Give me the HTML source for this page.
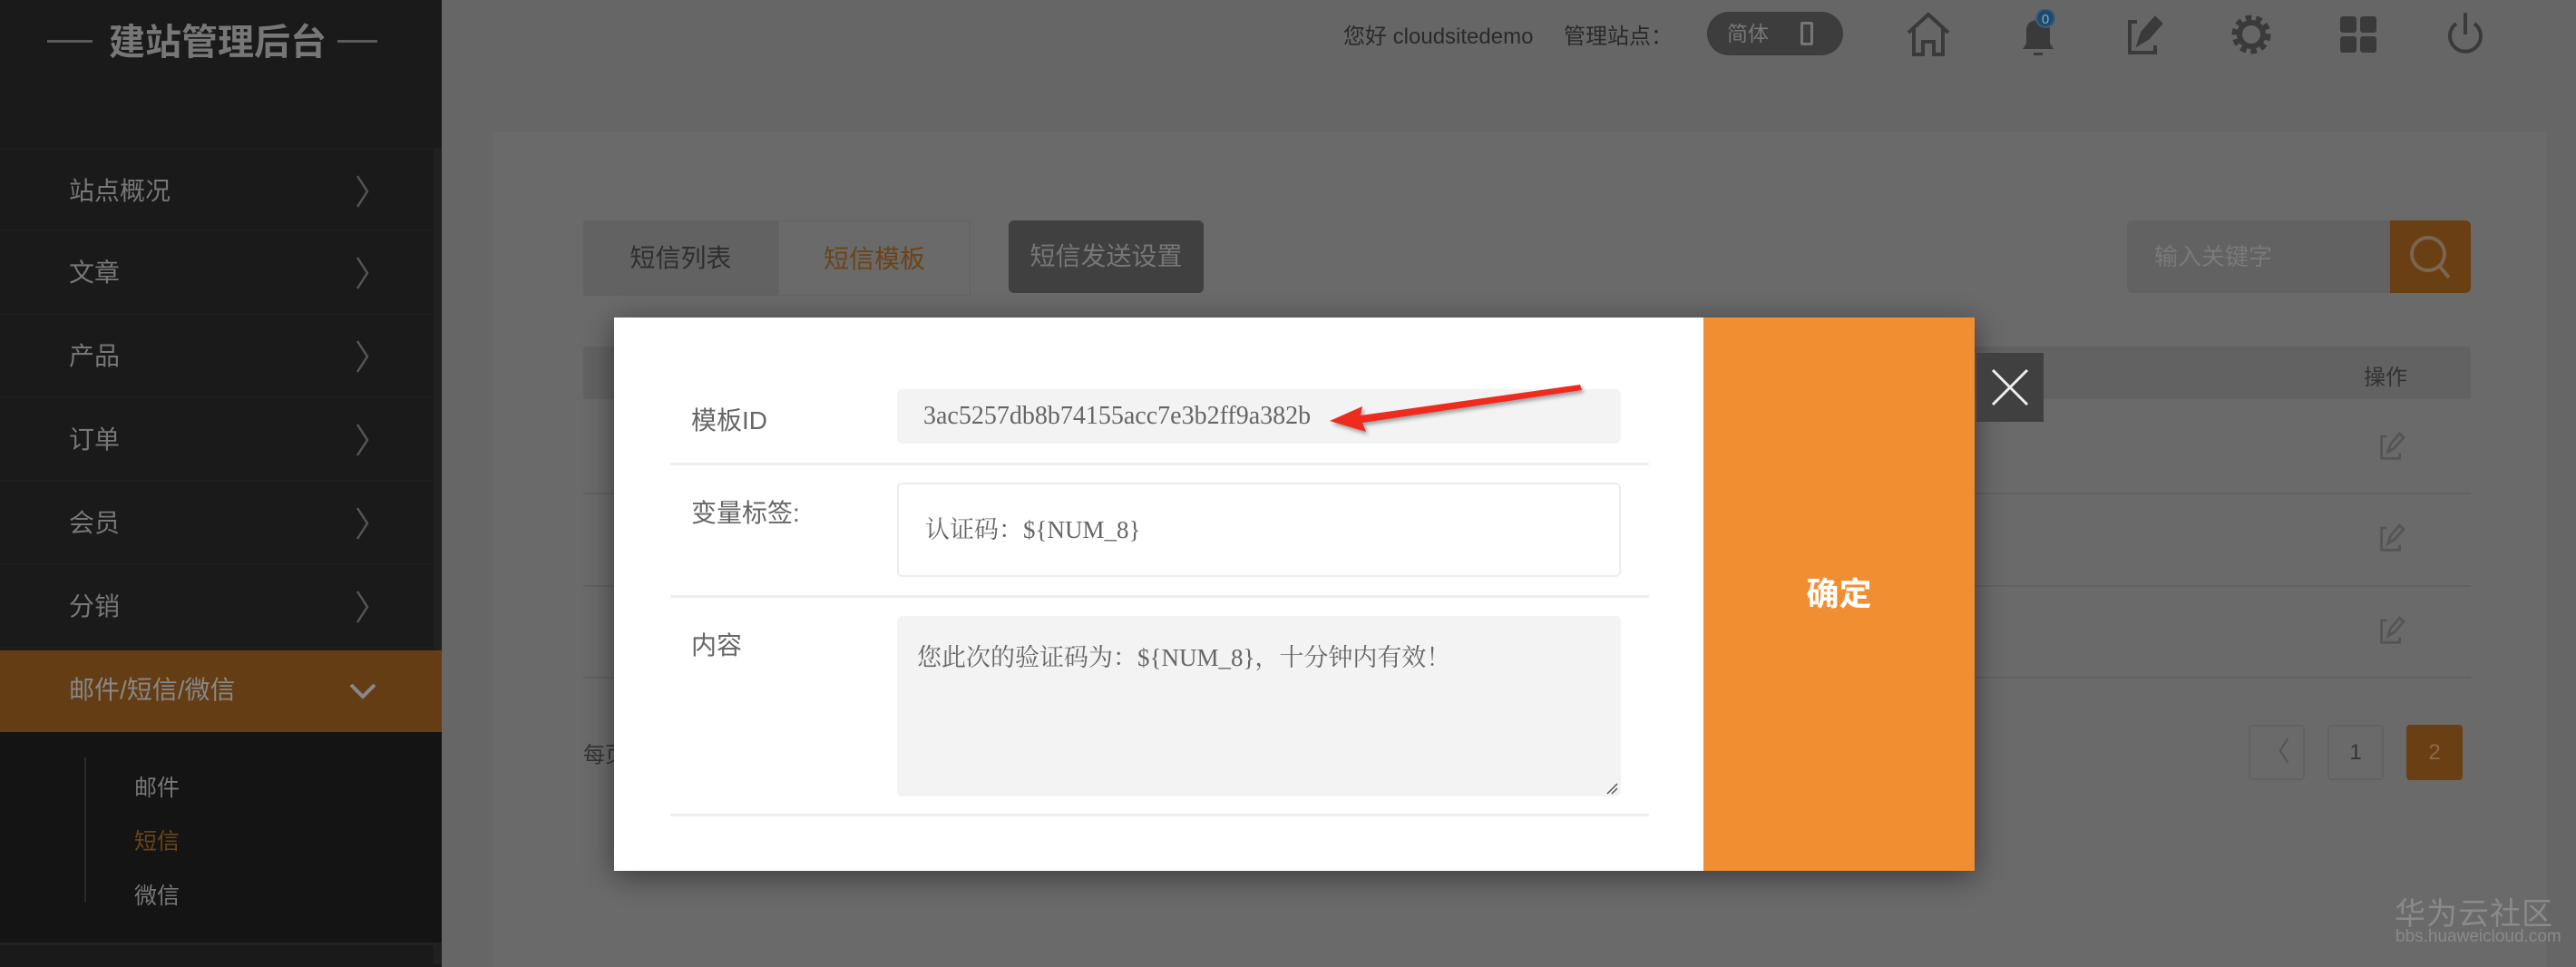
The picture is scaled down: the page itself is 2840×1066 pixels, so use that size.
<!DOCTYPE html>
<html><head><meta charset="utf-8"><style>
*{margin:0;padding:0;box-sizing:border-box}
body{width:2840px;height:1066px;overflow:hidden;background:#666;font-family:"Liberation Sans","Noto Sans CJK SC",sans-serif;position:relative}
.a{position:absolute}
.side{left:0;top:0;width:487px;height:1066px;background:#1a1a1a}
.mi{position:absolute;left:0;width:480px;height:92px;border-bottom:2px solid #1e1e1e;color:#777;font-size:28px;line-height:92px;padding-left:76px}
.mi .ch{position:absolute;left:392px;top:27px}
.sub{position:absolute;left:148px;font-size:25px;color:#777}
.ic{position:absolute;top:10px}
.lbl{position:absolute;left:762px;font-size:28px;color:#666}
.sep{position:absolute;left:739px;width:1079px;height:3px;background:#eee}
</style></head><body>
<div class="a side">
 <div class="a" style="left:52px;top:44px;width:50px;height:3px;background:#5a5a5a"></div>
 <div class="a" style="left:372px;top:44px;width:44px;height:3px;background:#5a5a5a"></div>
 <div class="a" style="left:110px;top:22px;width:260px;text-align:center;color:#777;font-size:40px;font-weight:bold;line-height:50px">建站管理后台</div>
 <div class="a" style="left:478px;top:163px;width:9px;height:900px;background:#202020"></div>
 <div class="mi" style="top:163px;border-top:2px solid #1e1e1e">站点概况<svg class="ch" width="16" height="38"><polyline points="2,2 13,19 2,36" fill="none" stroke="#555" stroke-width="2.5"/></svg></div>
 <div class="mi" style="top:255px">文章<svg class="ch" width="16" height="38"><polyline points="2,2 13,19 2,36" fill="none" stroke="#555" stroke-width="2.5"/></svg></div>
 <div class="mi" style="top:347px">产品<svg class="ch" width="16" height="38"><polyline points="2,2 13,19 2,36" fill="none" stroke="#555" stroke-width="2.5"/></svg></div>
 <div class="mi" style="top:439px">订单<svg class="ch" width="16" height="38"><polyline points="2,2 13,19 2,36" fill="none" stroke="#555" stroke-width="2.5"/></svg></div>
 <div class="mi" style="top:531px">会员<svg class="ch" width="16" height="38"><polyline points="2,2 13,19 2,36" fill="none" stroke="#555" stroke-width="2.5"/></svg></div>
 <div class="mi" style="top:623px">分销<svg class="ch" width="16" height="38"><polyline points="2,2 13,19 2,36" fill="none" stroke="#555" stroke-width="2.5"/></svg></div>
 <div class="mi" style="top:717px;height:90px;width:487px;background:#653d15;color:#888;border:none;line-height:88px">邮件/短信/微信<svg class="a" style="left:385px;top:35px" width="30" height="20"><polyline points="2,3 15,16 28,3" fill="none" stroke="#888" stroke-width="4"/></svg></div>
 <div class="a" style="left:0;top:807px;width:487px;height:232px;background:#141414"></div>
 <div class="a" style="left:93px;top:835px;width:2px;height:160px;background:#2a2a2a"></div>
 <div class="sub" style="top:849px">邮件</div>
 <div class="sub" style="top:908px;color:#6b4318">短信</div>
 <div class="sub" style="top:968px">微信</div>
 <div class="a" style="left:0;top:1039px;width:480px;height:3px;background:#222"></div>
</div>
<!-- top bar -->
<div class="a" style="left:1481px;top:20px;font-size:24px;color:#2a2a2a">您好 cloudsitedemo</div>
<div class="a" style="left:1724px;top:20px;font-size:24px;color:#2a2a2a">管理站点：</div>
<div class="a" style="left:1882px;top:13px;width:150px;height:48px;border-radius:24px;background:#3d3d3d;color:#777;font-size:23px;line-height:48px;padding-left:22px">简体<span style="position:absolute;left:103px;top:11px;width:14px;height:26px;border:3px solid #777;border-radius:2px"></span></div>
<svg class="ic" style="left:2098px" width="56" height="56" viewBox="0 0 56 56" fill="none" stroke="#3a3a3a" stroke-width="4"><path d="M6 26 L28 6 L50 26 M12 22 V50 H22 V36 H34 V50 H44 V22"/></svg>
<svg class="ic" style="left:2218px" width="60" height="56" viewBox="0 0 60 56"><path d="M12 44 H46 L42 38 V24 C42 16 37 12 29 12 C21 12 16 16 16 24 V38 Z M24 48 H34 V51 H24Z" fill="#3a3a3a"/><circle cx="37" cy="10" r="10" fill="#1f4a6a" stroke="#3d5e7a" stroke-width="2"/><text x="37" y="16" text-anchor="middle" font-size="15" fill="#8ab" font-family="Liberation Sans">0</text></svg>
<svg class="ic" style="left:2336px" width="56" height="56" viewBox="0 0 56 56" fill="none" stroke="#3a3a3a" stroke-width="4"><path d="M20 14 H12 V48 H40 V40"/><path d="M22 38 L26 26 L40 10 L46 16 L32 32 Z" fill="#3a3a3a"/></svg>
<svg class="ic" style="left:2454px" width="56" height="56" viewBox="0 0 56 56"><circle cx="28" cy="28" r="17" fill="none" stroke="#3a3a3a" stroke-width="9" stroke-dasharray="6 4.6"/><circle cx="28" cy="28" r="13" fill="none" stroke="#3a3a3a" stroke-width="6"/></svg>
<svg class="ic" style="left:2572px" width="56" height="56" viewBox="0 0 56 56" fill="#3a3a3a"><rect x="8" y="8" width="18" height="18" rx="3"/><rect x="30" y="8" width="18" height="18" rx="3"/><rect x="8" y="30" width="18" height="18" rx="3"/><rect x="30" y="30" width="18" height="18" rx="3"/></svg>
<svg class="ic" style="left:2690px" width="56" height="56" viewBox="0 0 56 56" fill="none" stroke="#3a3a3a" stroke-width="4"><path d="M18 16 A17 17 0 1 0 38 16"/><path d="M28 4 V28"/></svg>
<!-- content panel -->
<div class="a" style="left:543px;top:145px;width:2264px;height:921px;background:#6a6a6a"></div>
<div class="a" style="left:643px;top:243px;width:215px;height:83px;background:#626262;color:#2e2e2e;font-size:28px;line-height:83px;text-align:center">短信列表</div>
<div class="a" style="left:858px;top:243px;width:212px;height:83px;background:#6a6a6a;border:1px solid #636363;color:#6b4318;font-size:28px;line-height:83px;text-align:center">短信模板</div>
<div class="a" style="left:1112px;top:243px;width:215px;height:80px;background:#404040;border-radius:6px;color:#777;font-size:28px;line-height:80px;text-align:center">短信发送设置</div>
<div class="a" style="left:2345px;top:243px;width:290px;height:80px;background:#626262;border-radius:6px 0 0 6px;color:#7a7a7a;font-size:26px;line-height:80px;padding-left:30px">输入关键字</div>
<div class="a" style="left:2635px;top:243px;width:89px;height:80px;background:#6b3f14;border-radius:0 6px 6px 0"><svg width="89" height="80" viewBox="0 0 89 80" fill="none" stroke="#7a6650" stroke-width="4"><circle cx="42" cy="37" r="18"/><path d="M55 51 L65 63"/></svg></div>
<div class="a" style="left:643px;top:382px;width:2081px;height:58px;background:#626262;border-radius:4px"></div>
<div class="a" style="left:2606px;top:396px;font-size:24px;color:#333">操作</div>
<div class="a" style="left:643px;top:543px;width:2081px;height:2px;background:#626262"></div>
<div class="a" style="left:643px;top:645px;width:2081px;height:2px;background:#626262"></div>
<div class="a" style="left:643px;top:746px;width:2081px;height:2px;background:#626262"></div>
<svg class="a" style="left:2617px;top:471px" width="40" height="40" viewBox="0 0 56 56" fill="none" stroke="#555" stroke-width="4"><path d="M20 14 H12 V48 H40 V40 M22 38 L26 26 L40 10 L46 16 L32 32 Z"/></svg>
<svg class="a" style="left:2617px;top:572px" width="40" height="40" viewBox="0 0 56 56" fill="none" stroke="#555" stroke-width="4"><path d="M20 14 H12 V48 H40 V40 M22 38 L26 26 L40 10 L46 16 L32 32 Z"/></svg>
<svg class="a" style="left:2617px;top:674px" width="40" height="40" viewBox="0 0 56 56" fill="none" stroke="#555" stroke-width="4"><path d="M20 14 H12 V48 H40 V40 M22 38 L26 26 L40 10 L46 16 L32 32 Z"/></svg>
<div class="a" style="left:643px;top:812px;font-size:24px;color:#333">每页</div>
<div class="a" style="left:2479px;top:799px;width:62px;height:61px;border:2px solid #626262;border-radius:4px;color:#555;font-size:30px;line-height:57px;text-align:center">〈</div>
<div class="a" style="left:2566px;top:799px;width:62px;height:61px;border:2px solid #626262;border-radius:4px;color:#333;font-size:24px;line-height:57px;text-align:center">1</div>
<div class="a" style="left:2653px;top:799px;width:62px;height:61px;background:#6b3f14;border-radius:4px;color:#8a6a4a;font-size:24px;line-height:61px;text-align:center">2</div>
<!-- modal -->
<div class="a" style="left:677px;top:350px;width:1500px;height:610px;background:#fff;box-shadow:0 6px 30px rgba(0,0,0,.45)"></div>
<div class="a" style="left:1878px;top:350px;width:299px;height:610px;background:#f28e32;color:#fff;font-size:36px;font-weight:bold;line-height:610px;text-align:center">确定</div>
<div class="a" style="left:2179px;top:389px;width:74px;height:76px;background:#404040"><svg width="74" height="76" viewBox="0 0 74 76" stroke="#eee" stroke-width="3"><path d="M18 19 L56 57 M56 19 L18 57"/></svg></div>
<div class="lbl" style="top:442px">模板ID</div>
<div class="a" style="left:989px;top:429px;width:798px;height:60px;background:#f3f3f3;border-radius:6px;font-family:'Liberation Serif',serif;color:#666;font-size:28px;line-height:60px;padding-left:29px">3ac5257db8b74155acc7e3b2ff9a382b</div>
<div class="sep" style="top:510px"></div>
<div class="lbl" style="top:544px">变量标签:</div>
<div class="a" style="left:989px;top:532px;width:798px;height:104px;background:#fff;border:2px solid #ececec;border-radius:6px;color:#666;font-size:27px;line-height:100px;padding-left:29px;font-family:'Liberation Serif','Noto Serif CJK SC',serif">认证码：${NUM_8}</div>
<div class="sep" style="top:656px"></div>
<div class="lbl" style="top:690px">内容</div>
<div class="a" style="left:989px;top:679px;width:798px;height:199px;background:#f3f3f3;border-radius:6px;color:#666;font-size:27px;padding:24px 0 0 22px;font-family:'Liberation Serif','Noto Serif CJK SC',serif">您此次的验证码为：${NUM_8}，十分钟内有效！</div>
<svg class="a" style="left:1770px;top:862px" width="14" height="14" stroke="#555" stroke-width="1.5"><path d="M2 13 L13 2 M7 13 L13 7"/></svg>
<div class="sep" style="top:897px"></div>
<!-- arrow -->
<svg class="a" style="left:1440px;top:410px" width="320" height="80" viewBox="0 0 320 80"><path d="M302 14 L60 48 L62 38 L26 54 L66 66 L62 56 L304 20 Z" fill="#ef2b1e" style="filter:drop-shadow(2px 3px 2px rgba(0,0,0,.35))"/></svg>
<!-- watermark -->
<div class="a" style="left:2640px;top:980px;font-size:34px;color:#8a8a8a;letter-spacing:1px">华为云社区</div>
<div class="a" style="left:2641px;top:1022px;font-size:19px;color:#8a8a8a">bbs.huaweicloud.com</div>
</body></html>
